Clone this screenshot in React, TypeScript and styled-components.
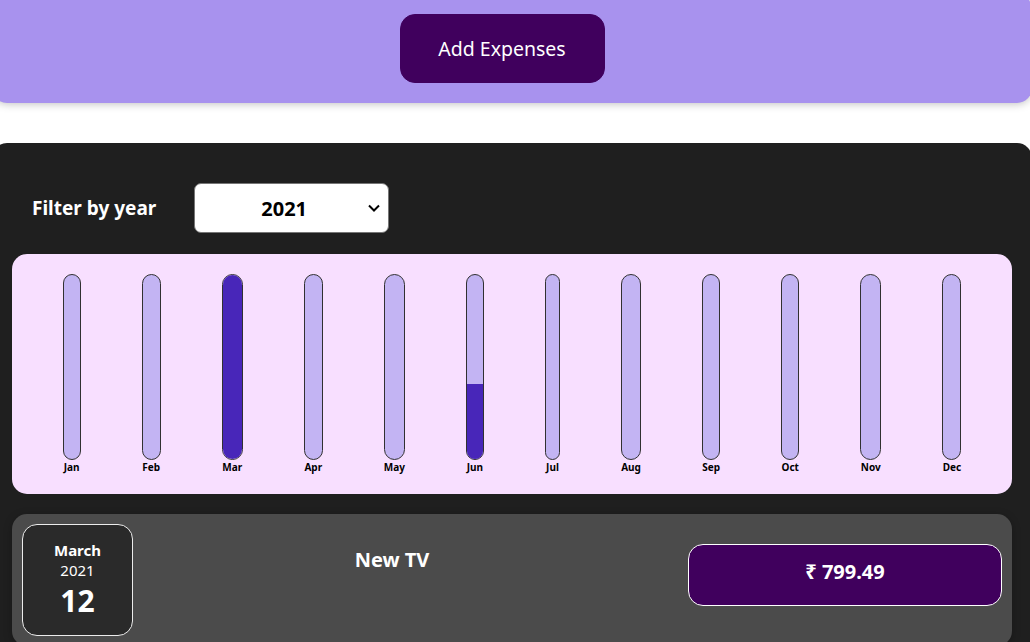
import React from "react";
import styled, { createGlobalStyle } from "styled-components";

const Global = createGlobalStyle`
  * { box-sizing: border-box; }
  html, body { margin: 0; padding: 0; background: #ffffff; overflow: hidden; }
  body { font-family: "Noto Sans", "Open Sans", sans-serif; }
`;

const Page = styled.div`
  width: 1040px;
  margin: -6px 0 0 -8px;
`;

const NewExpense = styled.div`
  background-color: #a892ee;
  padding: 20px;
  border-radius: 15px;
  text-align: center;
  box-shadow: 0 1px 8px rgba(0, 0, 0, 0.25);
`;

const AddButton = styled.button`
  font-family: inherit;
  font-size: 19.5px;
  line-height: 27px;
  height: 69px;
  width: 205px;
  cursor: pointer;
  border: 1px solid #40005d;
  background-color: #40005d;
  color: #ffffff;
  border-radius: 15px;
  margin-right: 20px;
  vertical-align: top;
`;

const Expenses = styled.div`
  margin-top: 40px;
  padding: 20px;
  background-color: #1f1f1f;
  border-radius: 15px;
`;

const FilterRow = styled.div`
  display: flex;
  align-items: center;
  gap: 38px;
  padding: 0 20px;
  margin: 20px 0 21px;
  color: #ffffff;
`;

const FilterLabel = styled.label`
  font-weight: bold;
  font-size: 19px;
`;

const SelectWrap = styled.div`
  position: relative;
  width: 195px;
  height: 50px;
`;

const Select = styled.select`
  appearance: none;
  width: 100%;
  height: 100%;
  font-family: inherit;
  font-size: 20px;
  font-weight: bold;
  color: #000000;
  background: #ffffff;
  border: 1px solid #767676;
  border-radius: 7px;
  padding: 0 0 0 66px;
  outline: none;
`;

const Chevron = styled.svg`
  position: absolute;
  right: 8px;
  top: 20px;
  pointer-events: none;
`;

const Chart = styled.div`
  padding: 20px;
  border-radius: 15px;
  background-color: #f8dfff;
  display: flex;
  justify-content: space-around;
  height: 240px;
`;

const ChartBar = styled.div<{ $w: number }>`
  height: 100%;
  width: ${(p) => p.$w}px;
  display: flex;
  flex-direction: column;
  align-items: center;
`;

const BarInner = styled.div`
  flex: 1;
  width: 100%;
  border: 1px solid #313131;
  border-radius: 15px;
  background-color: #c3b4f3;
  overflow: hidden;
  display: flex;
  flex-direction: column;
  justify-content: flex-end;
`;

const BarFill = styled.div`
  width: 100%;
  background-color: #4826b9;
`;

const BarLabel = styled.div`
  font-weight: bold;
  font-size: 10px;
  line-height: 14px;
  color: #000000;
  white-space: nowrap;
`;

const Item = styled.div`
  display: flex;
  align-items: flex-start;
  margin-top: 20px;
  padding: 10px;
  border-radius: 15px;
  background-color: #4b4b4b;
  box-shadow: 0 2px 8px rgba(0, 0, 0, 0.25);
`;

const DateBox = styled.div`
  display: flex;
  flex-direction: column;
  align-items: center;
  justify-content: center;
  width: 111px;
  height: 112px;
  padding-top: 1px;
  border: 1px solid #ececec;
  background-color: #2a2a2a;
  color: #ffffff;
  border-radius: 15px;
  flex-shrink: 0;
`;

const DateMonth = styled.div`
  font-size: 15px;
  line-height: 20px;
  font-weight: bold;
`;

const DateYear = styled.div`
  font-size: 15px;
  line-height: 20px;
`;

const DateDay = styled.div`
  font-size: 30px;
  line-height: 42px;
  font-weight: bold;
`;

const Description = styled.div`
  flex: 1;
  display: flex;
  align-items: flex-start;
  margin-top: 20px;
`;

const Title = styled.h2`
  flex: 1;
  margin: 0 57px 0 20px;
  padding-top: 2px;
  font-size: 20px;
  line-height: 27px;
  font-weight: bold;
  color: #ffffff;
  text-align: center;
`;

const Price = styled.div`
  width: 314px;
  height: 62px;
  padding-top: 13px;
  font-size: 20px;
  line-height: 27px;
  font-weight: bold;
  color: #ffffff;
  text-align: center;
  background-color: #40005d;
  border: 1px solid #ffffff;
  border-radius: 15px;
`;

const months = [
  { label: "Jan", w: 18, fill: 0 },
  { label: "Feb", w: 19, fill: 0 },
  { label: "Mar", w: 21, fill: 100 },
  { label: "Apr", w: 19, fill: 0 },
  { label: "May", w: 21, fill: 0 },
  { label: "Jun", w: 18, fill: 41 },
  { label: "Jul", w: 15, fill: 0 },
  { label: "Aug", w: 20, fill: 0 },
  { label: "Sep", w: 18, fill: 0 },
  { label: "Oct", w: 18, fill: 0 },
  { label: "Nov", w: 21, fill: 0 },
  { label: "Dec", w: 19, fill: 0 },
];

export default function App() {
  return (
    <>
      <Global />
      <Page>
        <NewExpense>
          <AddButton>Add Expenses</AddButton>
        </NewExpense>
        <Expenses>
          <FilterRow>
            <FilterLabel>Filter by year</FilterLabel>
            <SelectWrap>
              <Select defaultValue="2021">
                <option value="2022">2022</option>
                <option value="2021">2021</option>
                <option value="2020">2020</option>
                <option value="2019">2019</option>
              </Select>
              <Chevron width="14" height="10" viewBox="0 0 14 10">
                <path d="M2 2.5 L7 7.5 L12 2.5" fill="none" stroke="#000" strokeWidth="2" />
              </Chevron>
            </SelectWrap>
          </FilterRow>
          <Chart>
            {months.map((m) => (
              <ChartBar key={m.label} $w={m.w}>
                <BarInner>
                  <BarFill style={{ height: `${m.fill}%` }} />
                </BarInner>
                <BarLabel>{m.label}</BarLabel>
              </ChartBar>
            ))}
          </Chart>
          <Item>
            <DateBox>
              <DateMonth>March</DateMonth>
              <DateYear>2021</DateYear>
              <DateDay>12</DateDay>
            </DateBox>
            <Description>
              <Title>New TV</Title>
              <Price>₹ 799.49</Price>
            </Description>
          </Item>
        </Expenses>
      </Page>
    </>
  );
}
